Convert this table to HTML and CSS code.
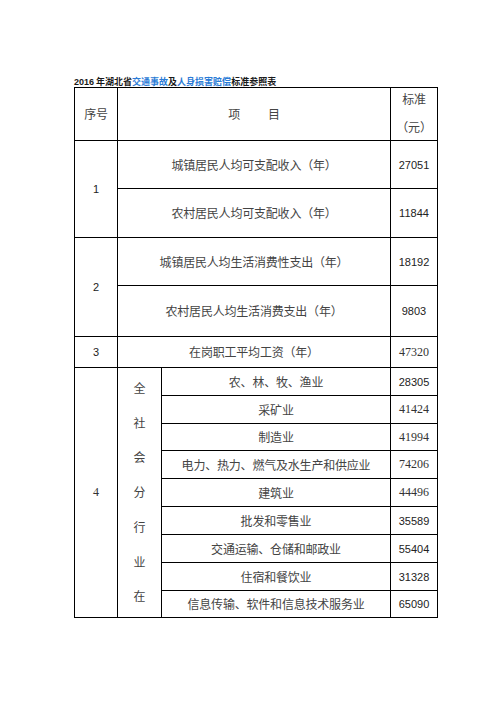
FILE: index.html
```html
<!DOCTYPE html>
<html lang="zh-CN">
<head>
<meta charset="utf-8">
<title>2016年湖北省交通事故及人身损害赔偿标准参照表</title>
<link rel="stylesheet" href="styles.css">
</head>
<body>
<div class="page">
  <div class="title"><span class="num">2016</span> 年湖北省<span class="link">交通事故</span>及<span class="link">人身损害赔偿</span>标准参照表</div>
  <table class="std">
    <colgroup>
      <col class="c1"><col class="c2"><col class="c3"><col class="c4">
    </colgroup>
    <tr class="h-head">
      <td class="cn">序号</td>
      <td class="cn" colspan="2"><span class="xm">项</span><span class="xm">目</span></td>
      <td class="cn"><div class="head-std">标准<br>（元）</div></td>
    </tr>
    <tr class="h-48">
      <td class="sans" rowspan="2">1</td>
      <td class="cn" colspan="2">城镇居民人均可支配收入（年）</td>
      <td class="sans">27051</td>
    </tr>
    <tr class="h-49">
      <td class="cn" colspan="2">农村居民人均可支配收入（年）</td>
      <td class="sans">11844</td>
    </tr>
    <tr class="h-48">
      <td class="sans" rowspan="2">2</td>
      <td class="cn" colspan="2">城镇居民人均生活消费性支出（年）</td>
      <td class="sans">18192</td>
    </tr>
    <tr class="h-51">
      <td class="cn" colspan="2">农村居民人均生活消费支出（年）</td>
      <td class="sans">9803</td>
    </tr>
    <tr class="h-31">
      <td class="sans">3</td>
      <td class="cn" colspan="2">在岗职工平均工资（年）</td>
      <td class="serif">47320</td>
    </tr>
    <tr class="h-28">
      <td class="serif" rowspan="9">4</td>
      <td class="vert" rowspan="9">
        <div class="vstack"><span>全</span><span>社</span><span>会</span><span>分</span><span>行</span><span>业</span><span>在</span></div>
      </td>
      <td class="cn">农、林、牧、渔业</td>
      <td class="sans">28305</td>
    </tr>
    <tr class="h-28">
      <td class="cn">采矿业</td>
      <td class="serif">41424</td>
    </tr>
    <tr class="h-27">
      <td class="cn">制造业</td>
      <td class="serif">41994</td>
    </tr>
    <tr class="h-28">
      <td class="cn">电力、热力、燃气及水生产和供应业</td>
      <td class="serif">74206</td>
    </tr>
    <tr class="h-28">
      <td class="cn">建筑业</td>
      <td class="serif">44496</td>
    </tr>
    <tr class="h-28">
      <td class="cn">批发和零售业</td>
      <td class="sans">35589</td>
    </tr>
    <tr class="h-28">
      <td class="cn">交通运输、仓储和邮政业</td>
      <td class="sans">55404</td>
    </tr>
    <tr class="h-28">
      <td class="cn">住宿和餐饮业</td>
      <td class="sans">31328</td>
    </tr>
    <tr class="h-27">
      <td class="cn">信息传输、软件和信息技术服务业</td>
      <td class="sans">65090</td>
    </tr>
  </table>
</div>
</body>
</html>
```

FILE: styles.css
```css
html, body {
  margin: 0;
  padding: 0;
  background: #ffffff;
}

.page {
  padding: 76px 0 0 74px;
}

.title {
  font-family: "Noto Sans CJK SC", "Liberation Sans", sans-serif;
  font-weight: 700;
  font-size: 9px;
  line-height: 11px;
  height: 11px;
  color: #1a1a1a;
  white-space: nowrap;
}

.title .num {
  font-family: "Liberation Sans", sans-serif;
}

.title .link {
  color: #2b7bd6;
}

.std {
  border-collapse: collapse;
  table-layout: fixed;
  width: 363px;
  border: 1px solid #000;
}

.c1 { width: 43px; }
.c2 { width: 44px; }
.c3 { width: 229px; }
.c4 { width: 47px; }

.std td {
  border: 1px solid #000;
  padding: 0;
  text-align: center;
  vertical-align: middle;
  color: #444;
  overflow: hidden;
}

.cn {
  font-family: "Noto Sans CJK SC", sans-serif;
  font-size: 12px;
  font-weight: 400;
  line-height: 14px;
  white-space: nowrap;
  letter-spacing: -0.2px;
}

.sans {
  font-family: "Liberation Sans", sans-serif;
  font-size: 11px;
  color: #222 !important;
}

.serif {
  font-family: "Liberation Serif", serif;
  font-size: 12px;
  color: #333 !important;
}

.xm {
  display: inline-block;
}

.xm + .xm {
  margin-left: 28px;
}

.head-std {
  line-height: 28px;
  margin: -3px 0 -1px;
}

.h-head td { height: 51px; }
.h-48 td { height: 47px; }
.h-49 td { height: 48px; }
.h-51 td { height: 50px; }
.h-31 td { height: 30px; }
.h-28 td { height: 27px; }
.h-27 td { height: 26px; }

.std td.vert {
  vertical-align: top;
}

.vstack {
  display: flex;
  flex-direction: column;
  align-items: center;
  padding-top: 3px;
  height: 244px;
  overflow: hidden;
}

.vstack span {
  font-family: "Noto Sans CJK SC", sans-serif;
  font-size: 12px;
  line-height: 34.7px;
  color: #444;
}
```
